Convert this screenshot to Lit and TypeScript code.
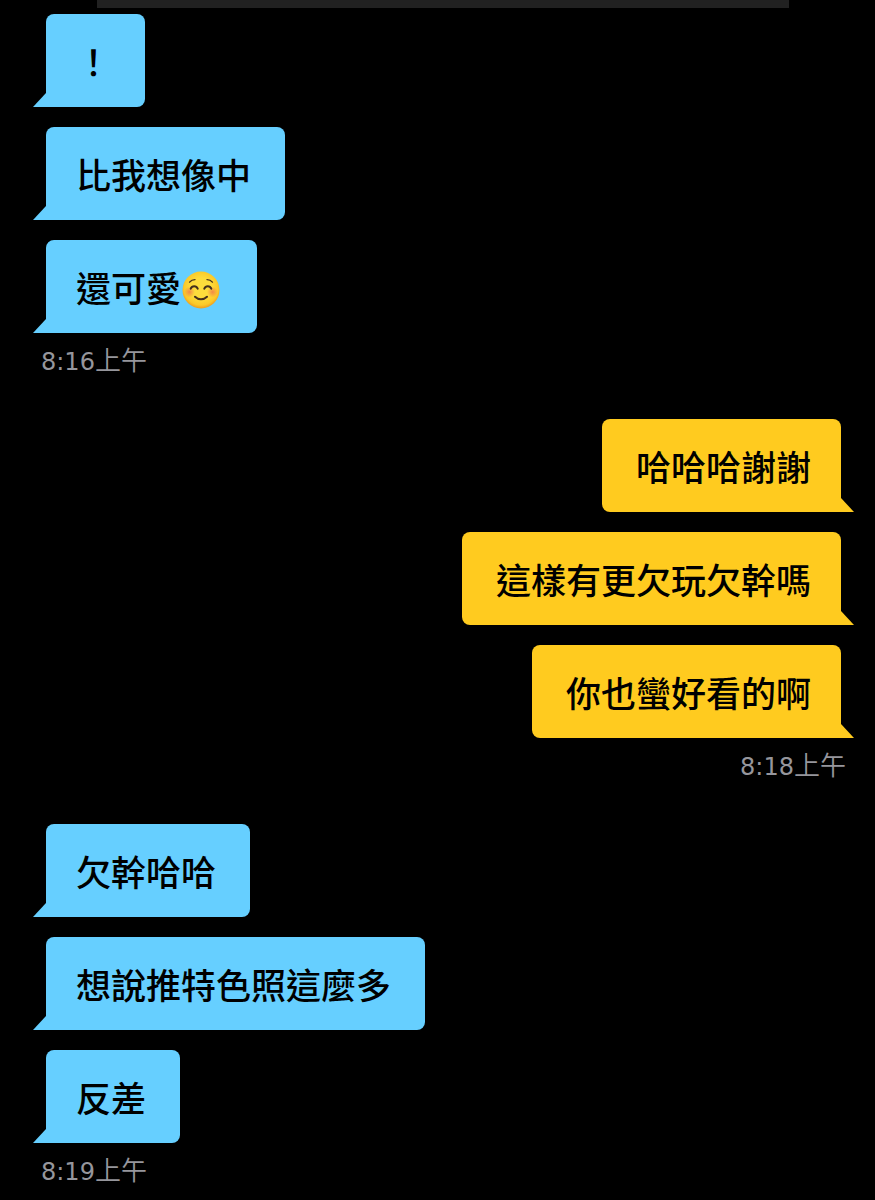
import { LitElement, html, css, svg, nothing } from "lit";
import { customElement, property } from "lit/decorators.js";

interface Message {
  text: string;
  smile?: boolean;
}

interface Group {
  side: "in" | "out";
  time: string;
  period: string;
  messages: Message[];
}

const groups: Group[] = [
  {
    side: "in",
    time: "8:16",
    period: "上午",
    messages: [{ text: "！" }, { text: "比我想像中" }, { text: "還可愛", smile: true }],
  },
  {
    side: "out",
    time: "8:18",
    period: "上午",
    messages: [{ text: "哈哈哈謝謝" }, { text: "這樣有更欠玩欠幹嗎" }, { text: "你也蠻好看的啊" }],
  },
  {
    side: "in",
    time: "8:19",
    period: "上午",
    messages: [{ text: "欠幹哈哈" }, { text: "想說推特色照這麼多" }, { text: "反差" }],
  },
];

const smileArt = svg`
  <defs>
    <radialGradient id="face" cx="50%" cy="45%" r="54%">
      <stop offset="0.5" stop-color="#fddc3c"></stop>
      <stop offset="0.85" stop-color="#fbc928"></stop>
      <stop offset="1" stop-color="#ee9f1f"></stop>
    </radialGradient>
    <radialGradient id="blush">
      <stop offset="0" stop-color="#f0764a" stop-opacity="0.8"></stop>
      <stop offset="1" stop-color="#f0764a" stop-opacity="0"></stop>
    </radialGradient>
  </defs>
  <circle cx="19" cy="19" r="18.5" fill="url(#face)"></circle>
  <circle cx="7.5" cy="21" r="5.5" fill="url(#blush)"></circle>
  <circle cx="30.5" cy="21" r="5.5" fill="url(#blush)"></circle>
  <g fill="none" stroke="#45301c" stroke-linecap="round" stroke-linejoin="round">
    <path stroke-width="1.4" d="M7.6 11.1C9 9.4 10.8 8.6 13 8.6M25 8.6c2.200 0 4 .8 5.400 2.500"></path>
    <path stroke-width="2" d="M8.700 17.700c1.300-3.300 5.700-3.300 7 0M22.300 17.700c1.300-3.300 5.700-3.300 7 0"></path>
    <path stroke-width="2.1" d="M13 25.800c3.400 3.300 8.600 3.300 12 0"></path>
  </g>
`;

@customElement("chat-bubble")
export class ChatBubble extends LitElement {
  @property({ attribute: false }) message: Message = { text: "" };
  @property({ reflect: true }) side: "in" | "out" = "in";

  static styles = css`
    :host {
      display: flex;
      align-items: flex-end;
      color: #66cfff;
      max-width: 100%;
    }
    :host([side="out"]) {
      flex-direction: row-reverse;
      color: #ffcb1f;
    }
    .tail {
      flex: none;
      width: 13px;
      height: 14px;
      background: currentColor;
      clip-path: polygon(100% 0, 100% 100%, 0 100%);
    }
    :host([side="out"]) .tail {
      clip-path: polygon(0 0, 100% 100%, 0 100%);
    }
    .body {
      background: currentColor;
      padding: 21px 34px 20px 30px;
      border-radius: 8px 8px 8px 0;
    }
    :host([side="out"]) .body {
      padding: 21px 30px 20px 34px;
      border-radius: 8px 8px 0 8px;
    }
    .text {
      display: flex;
      align-items: flex-end;
      margin: 0;
      color: #000;
      font-size: 35px;
      line-height: 52px;
      font-weight: 500;
    }
    .emoji {
      width: 38px;
      height: 38px;
      margin: 0 3px 4px 1px;
    }
  `;

  render() {
    return html`
      <span class="tail"></span>
      <div class="body">
        <p class="text">
          <span>${this.message.text}</span>${this.message.smile
            ? html`<svg class="emoji" viewBox="0 0 38 38" role="img" aria-label="☺️">${smileArt}</svg>`
            : nothing}
        </p>
      </div>
    `;
  }
}

@customElement("app-root")
export class AppRoot extends LitElement {
  static styles = css`
    :host {
      display: block;
      box-sizing: border-box;
      min-height: 100vh;
      background: #000;
      font-family: "Noto Sans CJK TC", sans-serif;
    }
    .card-edge {
      height: 8px;
      margin: 0 86px 0 97px;
      background: #212121;
    }
    .thread {
      display: flex;
      flex-direction: column;
      gap: 40px;
      padding: 6px 21px 0 33px;
    }
    .group {
      display: flex;
      flex-direction: column;
      align-items: flex-start;
    }
    .group.out {
      align-items: flex-end;
    }
    .bubbles {
      display: flex;
      flex-direction: column;
      align-items: inherit;
      gap: 20px;
    }
    .time {
      display: flex;
      align-items: baseline;
      margin: 6px 8px 0;
      height: 40px;
      color: #96969c;
      font-size: 26px;
      line-height: 40px;
      font-weight: 350;
    }
    .clock {
      font-family: "DejaVu Sans", sans-serif;
      font-size: 24px;
      font-weight: 400;
    }
  `;

  render() {
    return html`
      <div class="card-edge"></div>
      <main class="thread" lang="zh-Hant">
        ${groups.map(
          (g) => html`
            <section class="group ${g.side}">
              <div class="bubbles">
                ${g.messages.map((m) => html`<chat-bubble .message=${m} side=${g.side}></chat-bubble>`)}
              </div>
              <time class="time"><span class="clock">${g.time}</span><span>${g.period}</span></time>
            </section>
          `,
        )}
      </main>
    `;
  }
}
